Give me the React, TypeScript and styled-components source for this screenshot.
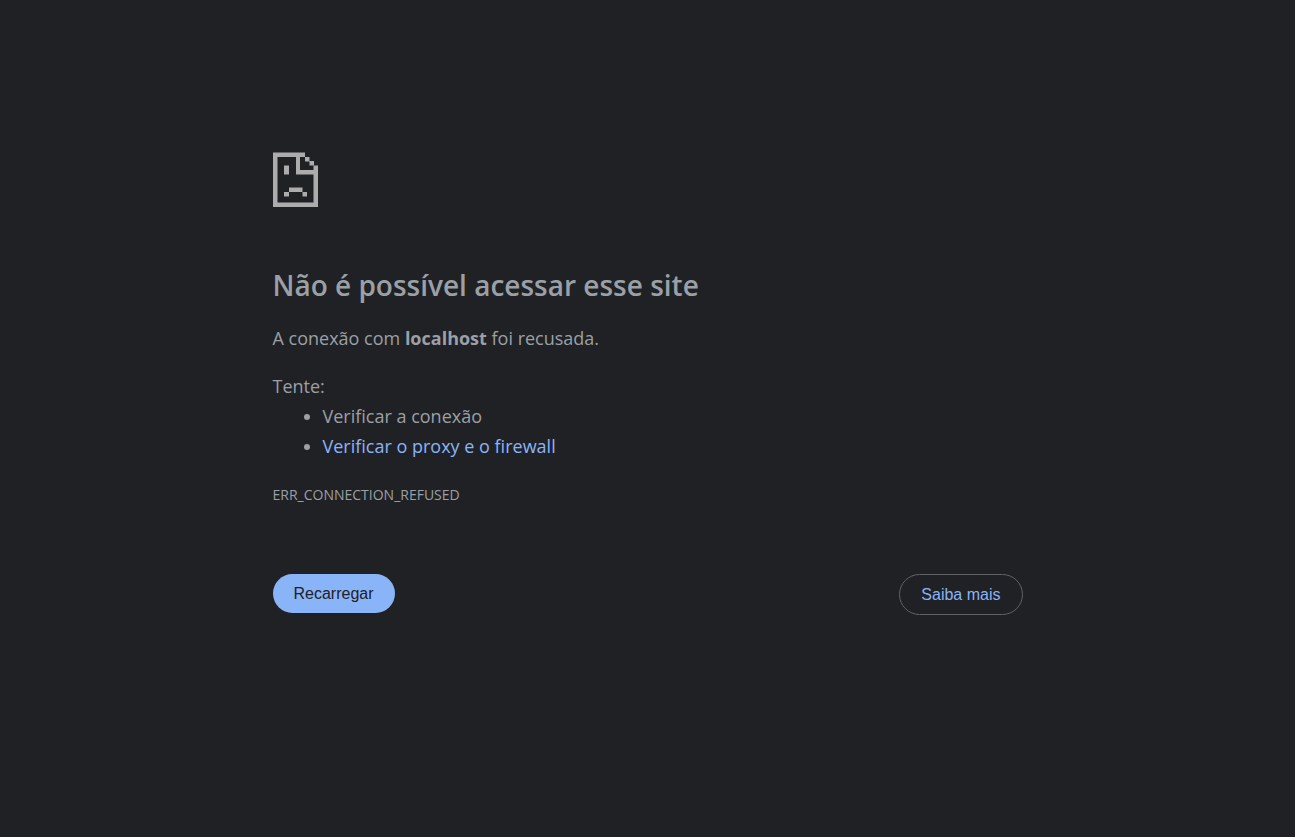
import React from 'react';
import styled, { createGlobalStyle } from 'styled-components';

const GlobalStyle = createGlobalStyle`
  * { box-sizing: border-box; }
  body {
    margin: 0;
    background: #202124;
    color: #9aa0a6;
    font-family: 'Open Sans', 'Noto Sans', sans-serif;
    font-size: 18px;
    line-height: 30px;
  }
`;

const ErrorPage = styled.main`
  width: 100%;
  max-width: 750px;
  margin: 0 auto;
  padding: 152px 0 40px;
`;

const PageIcon = styled.svg`
  display: block;
  width: 45px;
  height: 55px;
  fill: #acacac;
`;

const Title = styled.h1`
  margin: 60px 0 20px;
  font-size: 28px;
  font-weight: 600;
  line-height: 36px;
`;

const Summary = styled.p`
  margin: 0 0 18px;
`;

const Suggestions = styled.ul`
  margin: 0;
  padding: 0 0 0 50px;
`;

const HelpLink = styled.a`
  color: #8ab4f8;
  text-decoration: none;
`;

const ErrorCode = styled.p`
  margin: 22px 0 0;
  font-size: 14px;
  line-height: 24px;
`;

const Actions = styled.div`
  display: flex;
  flex-wrap: wrap;
  align-items: flex-start;
  justify-content: space-between;
  margin-top: 67px;
`;

const Button = styled.button<{ $outlined?: boolean }>`
  padding: 10px 21px;
  border: ${(p) => (p.$outlined ? '1px solid #5f6368' : '0')};
  border-radius: 24px;
  background: ${(p) => (p.$outlined ? 'transparent' : '#8ab4f8')};
  color: ${(p) => (p.$outlined ? '#8ab4f8' : '#202124')};
  font-family: 'Liberation Sans', Arial, sans-serif;
  font-size: 16px;
  line-height: 19px;
  cursor: pointer;
`;

export default function App() {
  return (
    <>
      <GlobalStyle />
      <ErrorPage>
        <PageIcon viewBox="0 0 90 110" aria-hidden="true">
          <path
            fillRule="evenodd"
            d="M0 1H64V10H54V36H81V27H90V110H0ZM9 10V101H81V45H46V10Z"
          />
          <path d="M64 10h9v9h-9zM73 18h9v9h-9zM22 27h10v18H22zM32 71h27v9H32zM22 80h10v9H22zM59 80h9v9h-9z" />
        </PageIcon>
        <Title>Não é possível acessar esse site</Title>
        <Summary>
          A conexão com <strong>localhost</strong> foi recusada.
        </Summary>
        <div>Tente:</div>
        <Suggestions>
          <li>Verificar a conexão</li>
          <li>
            <HelpLink href="#proxy">Verificar o proxy e o firewall</HelpLink>
          </li>
        </Suggestions>
        <ErrorCode>ERR_CONNECTION_REFUSED</ErrorCode>
        <Actions>
          <Button type="button">Recarregar</Button>
          <Button type="button" $outlined>
            Saiba mais
          </Button>
        </Actions>
      </ErrorPage>
    </>
  );
}
